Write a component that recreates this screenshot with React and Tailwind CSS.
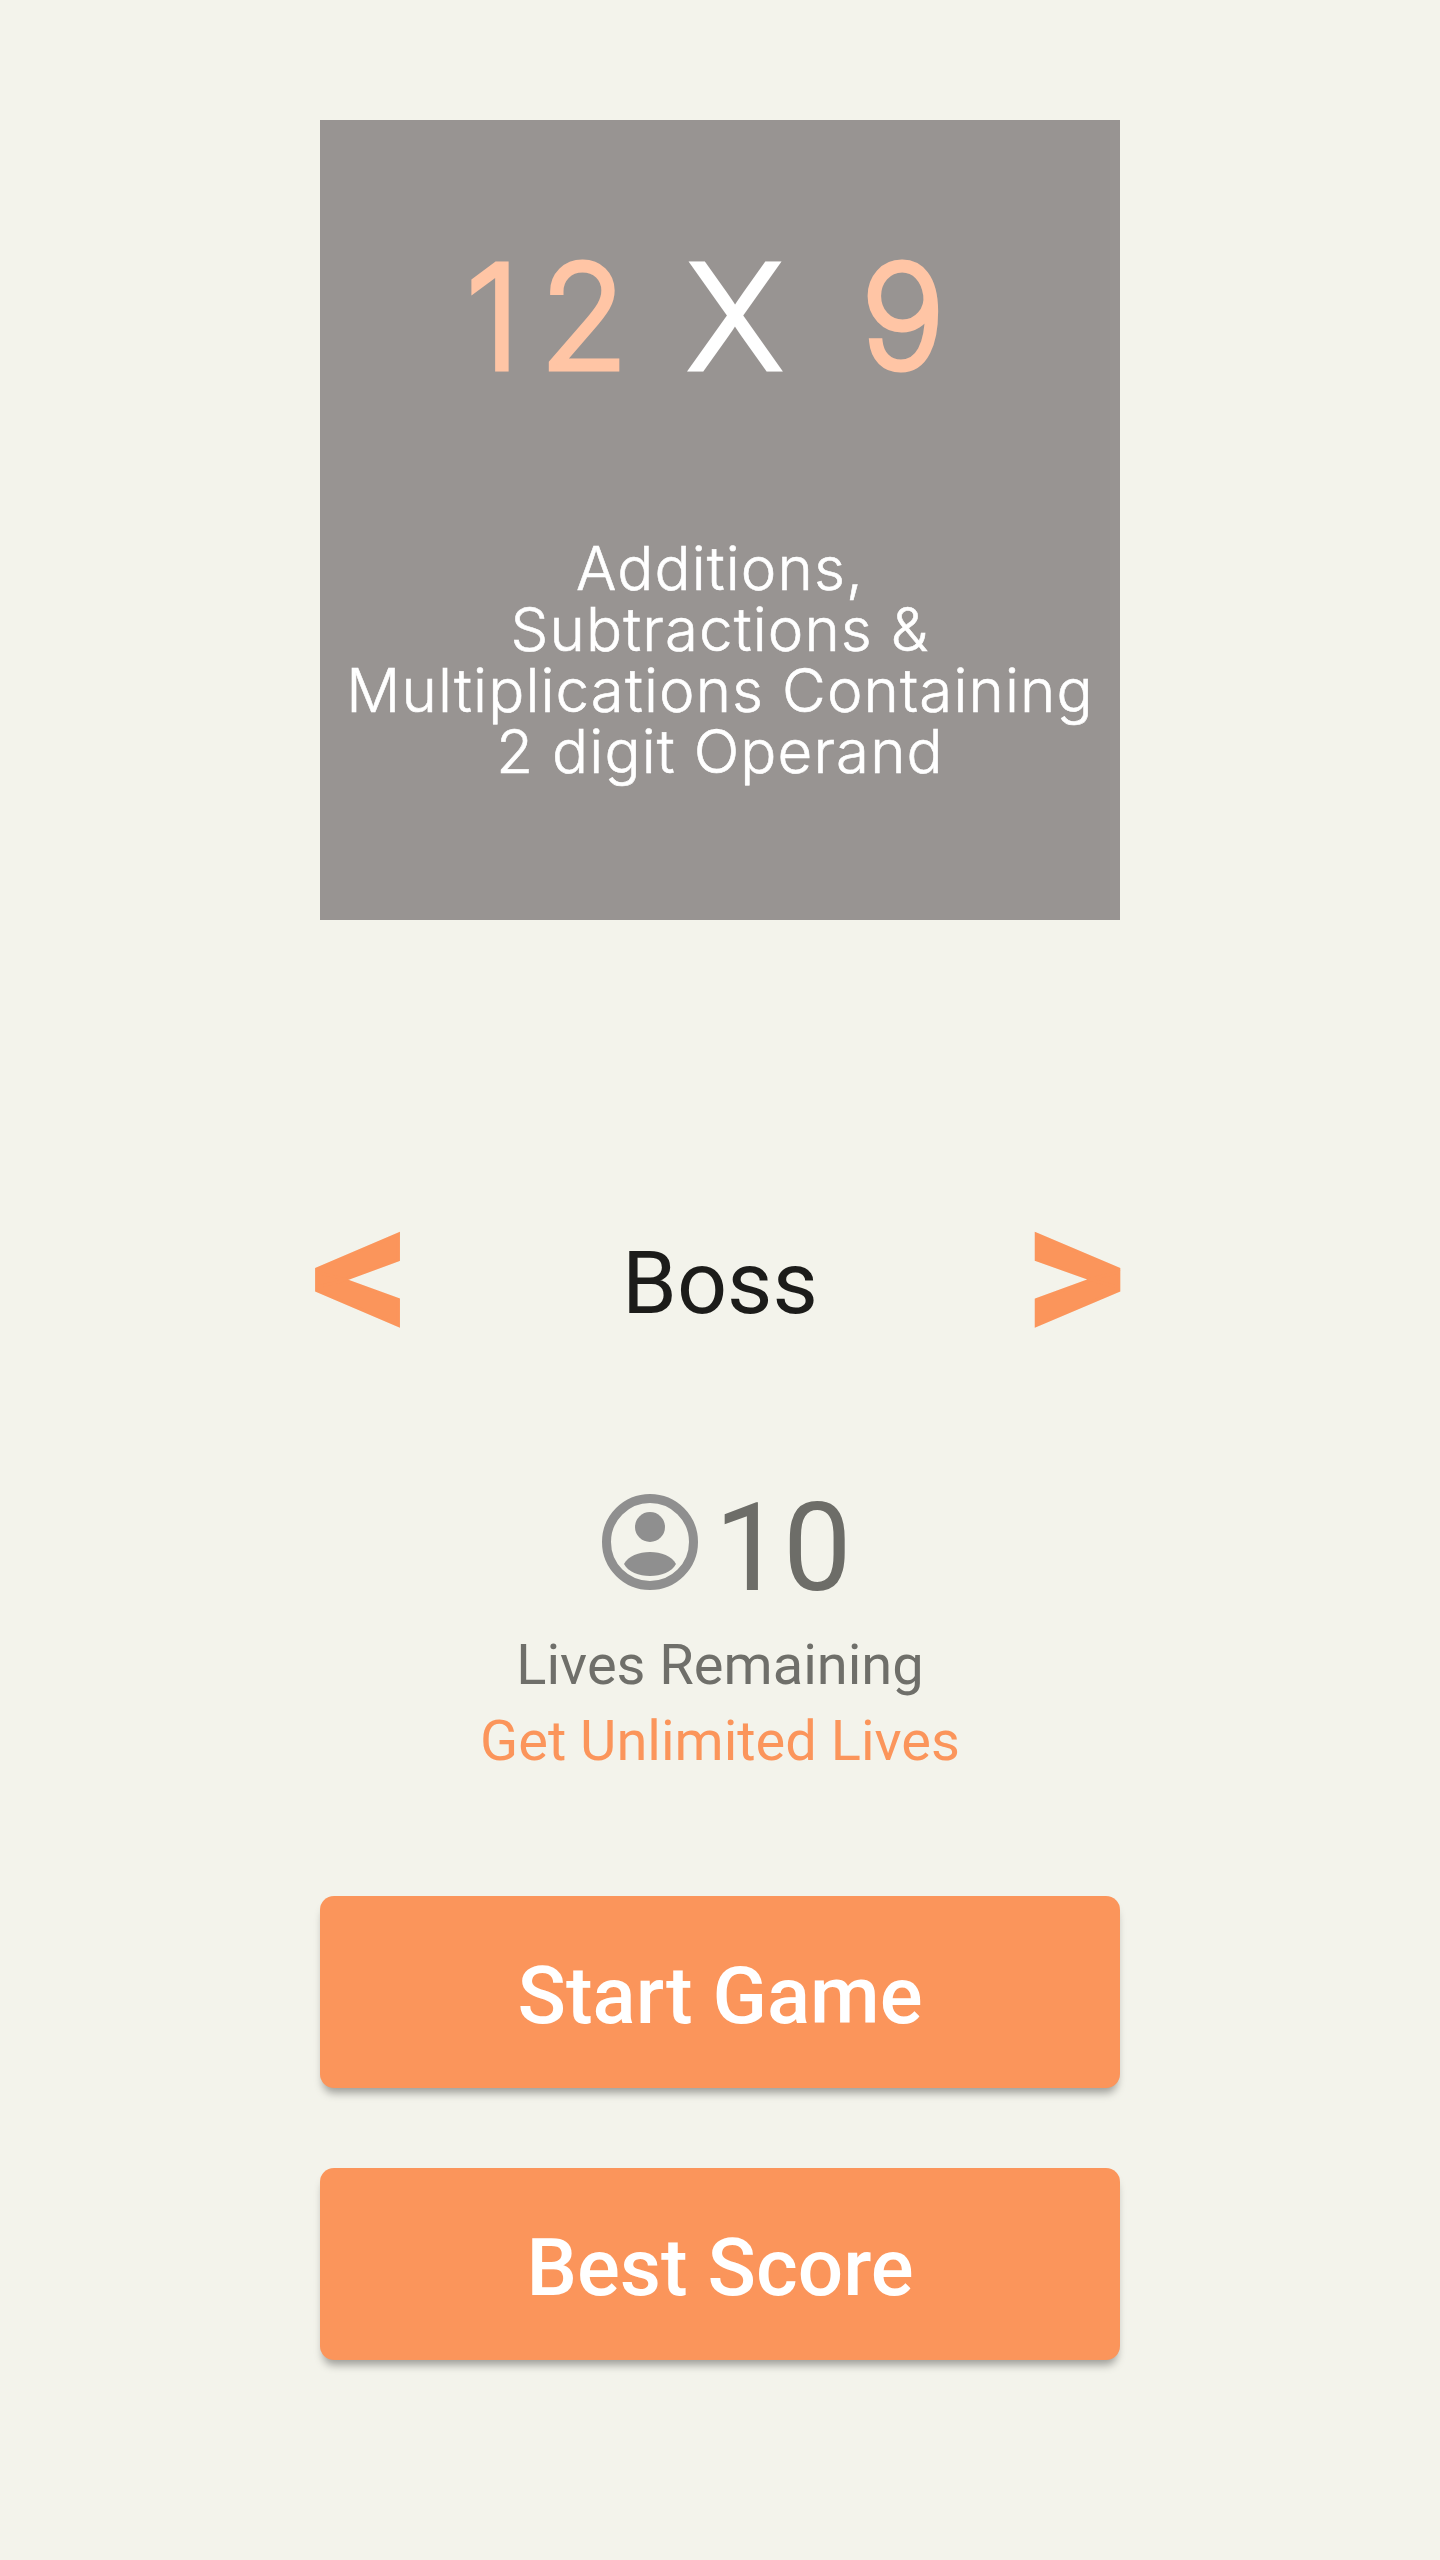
export default function App() {
  const roboto = "font-['Roboto',sans-serif]";
  const inter = "font-['Inter','Noto_Sans',sans-serif]";
  return (
    <div className={`min-h-[2560px] w-[1440px] bg-[#f3f3eb] flex flex-col items-center pt-[120px] ${roboto}`}>
      <div className="w-[800px] h-[800px] bg-[#989492] flex flex-col items-center">
        <div className={`mt-[116px] h-[160px] w-full flex pl-[140px] text-[142px] leading-[160px] font-extralight [-webkit-text-stroke:7px_currentColor] [stroke-linejoin:round] [stroke-linecap:round] ${inter}`}>
          <span className="w-[160px] ml-[6px] whitespace-nowrap text-center text-[#ffc5a5] tracking-[20px]">12</span>
          <span className="w-[160px] ml-[29px] text-center text-white">X</span>
          <span className="w-[160px] ml-[8px] text-center text-[#ffc5a5]">9</span>
        </div>
        <p className={`mt-[142px] w-full text-center text-white text-[60px] leading-[61px] font-light tracking-[1.1px] [-webkit-text-stroke:0.6px_currentColor] ${inter}`}>
          Additions,<br />Subtractions &amp;<br />Multiplications Containing<br />2 digit Operand
        </p>
      </div>

      <div className="mt-[303px] w-[818px] h-[120px] pr-[4px] flex items-center justify-between text-[#fb955b]">
        <span className="w-[100px] mb-[20px] text-center text-[194px] leading-[120px] font-bold [-webkit-text-stroke:3px_currentColor]">&lt;</span>
        <span className="ml-[4px] text-[88px] leading-[120px] text-[#1c1c1a]">Boss</span>
        <span className="w-[100px] mb-[20px] text-center text-[194px] leading-[120px] font-bold [-webkit-text-stroke:3px_currentColor]">&gt;</span>
      </div>

      <div className="mt-[139px] ml-[14px] h-[120px] flex items-center text-[#6d6d68]">
        <svg width="96" height="96" viewBox="0 0 96 96" className="mr-[16px]">
          <circle cx="48" cy="48" r="43.5" fill="none" stroke="#8f8f8f" strokeWidth="9" />
          <circle cx="48" cy="33" r="15" fill="#8f8f8f" />
          <path d="M22 70 C30 54 66 54 74 70 C66 86 30 86 22 70 Z" fill="#8f8f8f" />
        </svg>
        <span className="mt-[14px] text-[122px] leading-[120px]">10</span>
      </div>
      <div className="mt-[25px] text-[56px] leading-[76px] text-[#6f6f6a]">Lives Remaining</div>
      <div className="text-[56px] leading-[76px] text-[#fb955b]">Get Unlimited Lives</div>

      <button className="mt-[117px] w-[800px] h-[192px] pt-[8px] rounded-[14px] bg-[#fb955b] text-white text-[80px] font-medium shadow-[0_8px_8px_-3px_rgba(0,0,0,0.35)]">Start Game</button>
      <button className="mt-[80px] w-[800px] h-[192px] pt-[8px] rounded-[14px] bg-[#fb955b] text-white text-[80px] font-medium shadow-[0_8px_8px_-3px_rgba(0,0,0,0.35)]">Best Score</button>
    </div>
  );
}
